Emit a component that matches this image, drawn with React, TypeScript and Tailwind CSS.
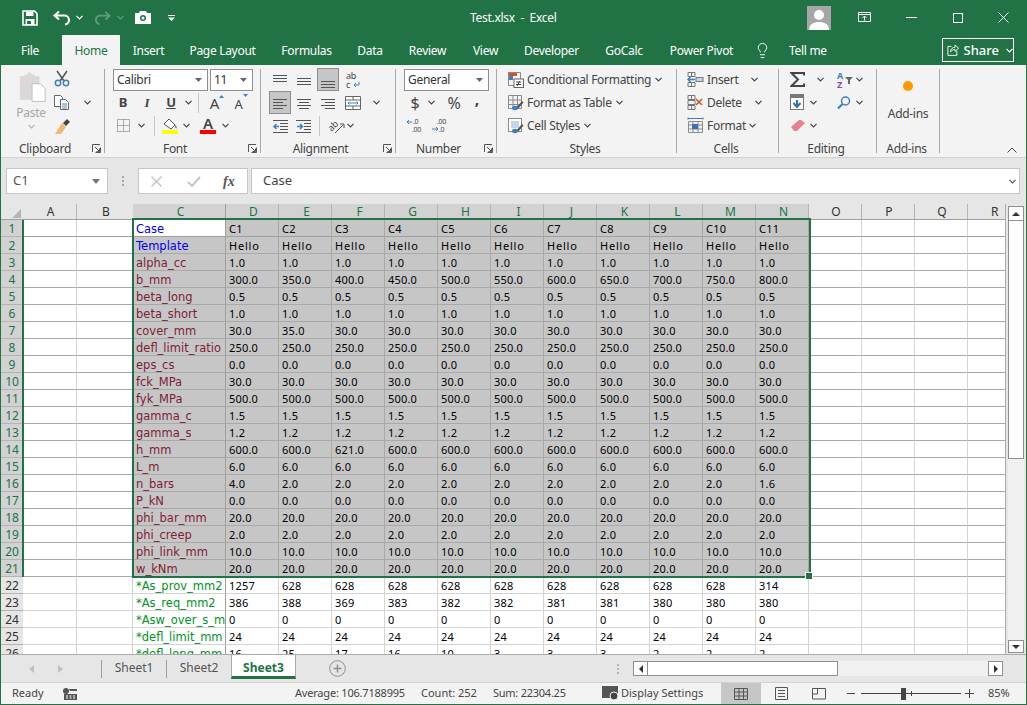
import { Lightbulb } from 'lucide-react';

const rows: [string, string[]][] = [
  ['Case', ['C1', 'C2', 'C3', 'C4', 'C5', 'C6', 'C7', 'C8', 'C9', 'C10', 'C11']],
  ['Template', Array(11).fill('Hello')],
  ['alpha_cc', Array(11).fill('1.0')],
  ['b_mm', ['300.0', '350.0', '400.0', '450.0', '500.0', '550.0', '600.0', '650.0', '700.0', '750.0', '800.0']],
  ['beta_long', Array(11).fill('0.5')],
  ['beta_short', Array(11).fill('1.0')],
  ['cover_mm', ['30.0', '35.0', ...Array(9).fill('30.0')]],
  ['defl_limit_ratio', Array(11).fill('250.0')],
  ['eps_cs', Array(11).fill('0.0')],
  ['fck_MPa', Array(11).fill('30.0')],
  ['fyk_MPa', Array(11).fill('500.0')],
  ['gamma_c', Array(11).fill('1.5')],
  ['gamma_s', Array(11).fill('1.2')],
  ['h_mm', ['600.0', '600.0', '621.0', ...Array(8).fill('600.0')]],
  ['L_m', Array(11).fill('6.0')],
  ['n_bars', ['4.0', ...Array(9).fill('2.0'), '1.6']],
  ['P_kN', Array(11).fill('0.0')],
  ['phi_bar_mm', Array(11).fill('20.0')],
  ['phi_creep', Array(11).fill('2.0')],
  ['phi_link_mm', Array(11).fill('10.0')],
  ['w_kNm', Array(11).fill('20.0')],
  ['*As_prov_mm2', ['1257', ...Array(9).fill('628'), '314']],
  ['*As_req_mm2', ['386', '388', '369', '383', '382', '382', '381', '381', '380', '380', '380']],
  ['*Asw_over_s_mm', Array(11).fill('0')],
  ['*defl_limit_mm', Array(11).fill('24')],
  ['*defl_long_mm', ['16', '25', '17', '16', '10', '3', '3', '3', '2', '2', '2']],
];

const dataCols = ['D', 'E', 'F', 'G', 'H', 'I', 'J', 'K', 'L', 'M', 'N'];

const Chev = ({ color = '#444' }: { color?: string }) => (
  <svg width="7" height="5" viewBox="0 0 7 5" className="shrink-0">
    <path d="M.5 .8 3.5 3.8 6.5 .8" fill="none" stroke={color} strokeWidth="1.2" />
  </svg>
);

const Lines = ({ ys, xs }: { ys: number[]; xs: [number, number][] }) => (
  <svg width="16" height="16" viewBox="0 0 16 16" className="shrink-0">
    {ys.map((y, i) => (
      <line key={y} x1={xs[i][0]} x2={xs[i][1]} y1={y} y2={y} stroke="#555" strokeWidth="1" />
    ))}
  </svg>
);

const Launcher = () => (
  <svg width="9" height="9" viewBox="0 0 9 9">
    <path d="M.5 8V.5H8M8.500 3.500v5h-5M3 3l4 4M7.500 4.500v3h-3" fill="none" stroke="#555" strokeWidth="1" />
  </svg>
);

const Group = ({ w, label, launcher, children }: { w: string; label: string; launcher?: boolean; children: React.ReactNode }) => (
  <div className={`${w} h-[84px] shrink-0 border-r border-[#a9a9a9] flex flex-col`}>
    <div className="h-[73px] shrink-0 -mt-px">{children}</div>
    <div className={`grid ${launcher ? 'grid-cols-[1fr_auto_1fr_12px]' : 'grid-cols-[1fr_auto_1fr]'} items-center h-[15px] shrink-0 pr-[3px]`}>
      <span />
      <span className="text-[12px] leading-[15px] text-[#444] whitespace-nowrap">{label}</span>
      <span />
      {launcher && <span className="justify-self-end flex"><Launcher /></span>}
    </div>
  </div>
);

const Row = ({ children }: { children: React.ReactNode }) => <div className="flex items-center h-[23px]">{children}</div>;

const Combo = ({ w, text }: { w: string; text: string }) => (
  <div className={`${w} h-[22px] bg-white border border-[#8f8f8f] flex items-center justify-between pl-[3px] pr-[5px] text-[12px] text-[#333]`}>
    <span>{text}</span>
    <svg width="7" height="4" viewBox="0 0 7 4"><path d="M0 0h7L3.500 4z" fill="#666" /></svg>
  </div>
);

const Sep = ({ className }: { className: string }) => <div className={`w-px h-[20px] bg-[#c6c6c6] ${className}`} />;

const GridBase = ({ children }: { children?: React.ReactNode }) => (
  <svg width="17" height="17" viewBox="0 0 17 17" className="shrink-0">
    <path d="M1.500 1.500h13v13h-13zM1.500 6h13M1.500 10.500h13M6 1.500v13M10.500 1.500v13" fill="none" stroke="#8a8a8a" strokeWidth="1" />
    {children}
  </svg>
);

const Brush = () => (
  <g>
    <path d="M9 14 15 7l1.500 1.500L11 15z" fill="#555" />
    <ellipse cx="8" cy="14" rx="3" ry="2.200" fill="#3f7fc0" />
  </g>
);

export default function App() {
  return (
    <div className="w-[1027px] h-[705px] overflow-hidden flex flex-col bg-[#217346] border-x border-b border-[#217346] text-[12px] tracking-[-0.3px] text-[#444] font-['Noto_Sans',sans-serif]">
      {/* title bar */}
      <div className="h-[35px] shrink-0 flex items-center text-white">
        <div className="w-[469px] flex items-center shrink-0">
          <svg width="16" height="16" viewBox="0 0 16 16" className="ml-[21px]">
            <path d="M1 1h11.500L15 3.500V15H1z" fill="none" stroke="#fff" strokeWidth="1.600" />
            <rect x="4" y="1.500" width="7.500" height="4.500" fill="#fff" />
            <rect x="3.500" y="9" width="9" height="6" fill="#fff" />
            <rect x="5" y="11" width="4" height="3" fill="#217346" />
          </svg>
          <svg width="19" height="16" viewBox="0 0 19 16" className="ml-[14px]">
            <path d="M7 1.500 2.500 5.500 7 9.500M3 5.500h9a4.500 4.500 0 0 1 1 9" fill="none" stroke="#fff" strokeWidth="2" />
          </svg>
          <div className="ml-[5px]"><Chev color="#fff" /></div>
          <svg width="18" height="16" viewBox="0 0 19 16" className="ml-[11px]">
            <path d="M12 1.500 16.500 5.500 12 9.500M16 5.500H7a4.500 4.500 0 0 0-1 9" fill="none" stroke="#5e9c7b" strokeWidth="2" />
          </svg>
          <div className="ml-[5px]"><Chev color="#5e9c7b" /></div>
          <svg width="16" height="13" viewBox="0 0 16 13" className="ml-[11px]">
            <path d="M0 2h4l1-2h6l1 2h4v11H0z" fill="#fff" />
            <circle cx="8" cy="7" r="3" fill="#217346" />
            <circle cx="8" cy="7" r="1.500" fill="#fff" />
          </svg>
          <svg width="7" height="6" viewBox="0 0 7 6" className="ml-[17px]">
            <path d="M0 .5h7" stroke="#fff" />
            <path d="M0 2.500h7L3.500 6z" fill="#fff" />
          </svg>
        </div>
        <span className="text-[12px] whitespace-pre">Test.xlsx  -  Excel</span>
        <div className="ml-auto flex items-center">
          <svg width="24" height="24" viewBox="0 0 24 24" className="block">
            <rect width="24" height="24" fill="#a6a6a6" />
            <circle cx="12" cy="9" r="5" fill="#fff" />
            <path d="M2 24c0-6 5-8 10-8s10 2 10 8z" fill="#fff" />
          </svg>
          <svg width="14" height="11" viewBox="0 0 14 11" className="ml-[27px]">
            <path d="M.5 .5h12v9H.5zM.5 2.500h12M6.500 8.500v-4M4.500 6l2-2 2 2" fill="none" stroke="#fff" />
          </svg>
          <div className="ml-[34px] w-[11px] h-px bg-white" />
          <div className="ml-[36px] w-[10px] h-[10px] border border-white" />
          <svg width="11" height="11" viewBox="0 0 11 11" className="ml-[35px] mr-[17px]">
            <path d="M.5 .5 10.500 10.500M10.500 .5 .5 10.500" stroke="#fff" />
          </svg>
        </div>
      </div>

      {/* tabs */}
      <div className="h-[30px] shrink-0 flex text-white text-[12px] leading-[31px]">
        <div className="w-[58px] text-center">File</div>
        <div className="w-[58px] ml-[3px] text-center bg-[#f3f3f3] text-[#217346]">Home</div>
        <div className="w-[57px] text-center">Insert</div>
        <div className="w-[91px] text-center">Page Layout</div>
        <div className="w-[77px] text-center">Formulas</div>
        <div className="w-[50px] text-center">Data</div>
        <div className="w-[65px] text-center">Review</div>
        <div className="w-[51px] text-center">View</div>
        <div className="w-[81px] text-center">Developer</div>
        <div className="w-[64px] text-center">GoCalc</div>
        <div className="w-[91px] text-center">Power Pivot</div>
        <div className="ml-[7px] w-[17px] shrink-0 flex items-center"><Lightbulb size={17} strokeWidth={1.3} /></div>
        <div className="ml-[18px] w-[38px] shrink-0 whitespace-nowrap">Tell me</div>
        <div className="ml-[115px] mt-[3px] w-[72px] h-[24px] shrink-0 flex items-center border border-white text-[13px] leading-[22px] font-medium tracking-normal">
          <svg width="14" height="14" viewBox="0 0 14 14" className="ml-[4px] mr-[4px]">
            <path d="M5 3H1v10h10V8M4 9c0-3 2-5 5-5V1.500L13 5 9 8.500V6.500C7 6.500 5 7.500 4 9z" fill="none" stroke="#fff" />
          </svg>
          <span>Share</span>
          <div className="ml-[7px]"><Chev color="#fff" /></div>
        </div>
      </div>

      {/* ribbon */}
      <div className="h-[93px] shrink-0 flex pt-[4px] bg-[#f3f3f3] border-b border-[#d2d2d2]">
        <Group w="w-[104px]" label="Clipboard" launcher>
          <div className="flex">
            <div className="ml-[11px] w-[38px] flex flex-col items-center text-[#a6a6a6]">
              <svg width="28" height="31" viewBox="0 0 30 32" className="mt-[4px] ml-[4px]">
                <path d="M1 4h5V2h3l1-2h3l1 2h3v2h5v25H1z" fill="#dcd8d8" />
                <path d="M14 12h9l5 5v14H14z" fill="#fff" stroke="#bdbdbd" />
              </svg>
              <span className="mt-[2px] leading-[16px]">Paste</span>
              <div className="mt-[3px]"><Chev color="#b5b5b5" /></div>
            </div>
            <div className="ml-[4px]">
              <Row>
                <svg width="16" height="17" viewBox="0 0 16 17" className="-mt-[2px]">
                  <path d="M3 1l7 10M13 1 6 11" stroke="#555" strokeWidth="1.500" fill="none" />
                  <circle cx="4" cy="13" r="2.700" fill="none" stroke="#4a7fb5" strokeWidth="1.500" />
                  <circle cx="12" cy="13" r="2.700" fill="none" stroke="#4a7fb5" strokeWidth="1.500" />
                </svg>
              </Row>
              <Row>
                <svg width="16" height="15" viewBox="0 0 16 15">
                  <path d="M.5 .5h6l2 2v9h-8z" fill="#fff" stroke="#666" />
                  <path d="M6.500 4.500h5l3 3v7h-8z" fill="#fff" stroke="#666" />
                  <path d="M8 9h5M8 11h5M8 13h5" stroke="#5b8dc0" />
                </svg>
                <div className="ml-[14px]"><Chev /></div>
              </Row>
              <Row>
                <svg width="17" height="16" viewBox="0 0 17 16">
                  <path d="M9 5 13 1l3 3-4 4z" fill="#444" />
                  <path d="M8 5l4 4-5 7H1z" fill="#f0b775" />
                </svg>
              </Row>
            </div>
          </div>
        </Group>

        <Group w="w-[156px]" label="Font" launcher>
          <Row>
            <div className="ml-[8px]"><Combo w="w-[95px]" text="Calibri" /></div>
            <div className="ml-[2px]"><Combo w="w-[43px]" text="11" /></div>
          </Row>
          <Row>
            <div className="ml-[6px] w-[24px] text-center font-bold text-[13px]">B</div>
            <div className="w-[24px] text-center italic text-[13px] font-['Liberation_Serif',serif] font-bold">I</div>
            <div className="w-[24px] text-center underline font-bold text-[13px]">U</div>
            <div className="ml-[2px]"><Chev /></div>
            <Sep className="ml-[6px]" />
            <div className="ml-[6px] w-[24px] flex justify-center items-start">
              <span className="text-[15px] leading-[18px]">A</span>
              <svg width="5" height="3" viewBox="0 0 5 3" className="mt-[1px]"><path d="M0 3h5L2.500 0z" fill="#3f7fc0" /></svg>
            </div>
            <div className="w-[24px] flex justify-center items-start">
              <span className="text-[13px] leading-[18px] mt-[2px]">A</span>
              <svg width="5" height="3" viewBox="0 0 5 3" className="mt-[1px]"><path d="M0 0h5L2.500 3z" fill="#3f7fc0" /></svg>
            </div>
          </Row>
          <Row>
            <svg width="13" height="13" viewBox="0 0 13 13" className="ml-[12px]">
              <path d="M.5 .5h12v12H.5zM6.500 .5v12M.5 6.500h12" fill="none" stroke="#666" strokeDasharray="1 1" />
            </svg>
            <div className="ml-[8px]"><Chev /></div>
            <Sep className="ml-[9px]" />
            <svg width="16" height="17" viewBox="0 0 16 17" className="ml-[7px]">
              <path d="M2 7 7 2l6 6-4 4z" fill="#fff" stroke="#555" />
              <path d="M13 8c2 1 2 3 1.500 3.500S12.500 10 13 8z" fill="#3f7fc0" />
              <rect y="13" width="16" height="4" fill="#ffff00" />
            </svg>
            <div className="ml-[5px]"><Chev /></div>
            <div className="ml-[10px] w-[16px] flex flex-col items-center">
              <span className="text-[15px] leading-[13px] font-semibold">A</span>
              <div className="w-[16px] h-[4px] bg-[#ff0000]" />
            </div>
            <div className="ml-[6px]"><Chev /></div>
          </Row>
        </Group>

        <Group w="w-[135px]" label="Alignment" launcher>
          <Row>
            <div className="ml-[11px]"><Lines ys={[3.500, 6.500, 9.500]} xs={[[1, 15], [1, 15], [1, 15]]} /></div>
            <div className="ml-[8px]"><Lines ys={[6.500, 9.500, 12.500]} xs={[[1, 15], [1, 15], [1, 15]]} /></div>
            <div className="ml-[5px] w-[22px] h-[23px] flex items-center justify-center bg-[#c6c6c6] border border-[#8f8f8f]"><Lines ys={[9.500, 12.500, 15.500]} xs={[[1, 15], [1, 15], [1, 15]]} /></div>
            <svg width="15" height="18" viewBox="0 0 15 18" className="ml-[7px]">
              <text x="0" y="7.500" fontSize="9" fill="#444" fontFamily="Noto Sans">ab</text>
              <text x="0" y="16.500" fontSize="9" fill="#444" fontFamily="Noto Sans">c</text>
              <path d="M13 11v3H8M10 12l-2 2 2 2" fill="none" stroke="#3f7fc0" />
            </svg>
          </Row>
          <Row>
            <div className="ml-[8px] w-[22px] h-[23px] flex items-center justify-center bg-[#c6c6c6] border border-[#8f8f8f]"><Lines ys={[4.500, 7.500, 10.500, 13.500]} xs={[[1, 15], [1, 11], [1, 15], [1, 11]]} /></div>
            <div className="ml-[5px]"><Lines ys={[4.500, 7.500, 10.500, 13.500]} xs={[[1, 15], [3, 13], [1, 15], [3, 13]]} /></div>
            <div className="ml-[8px]"><Lines ys={[4.500, 7.500, 10.500, 13.500]} xs={[[1, 15], [5, 15], [1, 15], [5, 15]]} /></div>
            <svg width="16" height="16" viewBox="0 0 16 16" className="ml-[9px]">
              <path d="M.5 1.500h15v13H.5zM.5 5h15M.5 11h15M8 1.500V5M8 11v3.500" fill="#fff" stroke="#666" />
              <path d="M3 8h10M4.500 6.500 3 8l1.500 1.500M11.500 6.500 13 8l-1.500 1.500" fill="none" stroke="#3f7fc0" />
            </svg>
            <div className="ml-[12px]"><Chev /></div>
          </Row>
          <Row>
            <svg width="16" height="16" viewBox="0 0 16 16" className="ml-[11px]">
              <path d="M1 2.500h15M8 5.500h8M8 8.500h8M8 11.500h8M1 14.500h15" stroke="#555" />
              <path d="M7 8.500H2M4.500 6 2 8.500 4.500 11" fill="none" stroke="#3f7fc0" strokeWidth="1.500" />
            </svg>
            <svg width="16" height="16" viewBox="0 0 16 16" className="ml-[8px]">
              <path d="M0 2.500h15M8 5.500h7M8 8.500h7M8 11.500h7M0 14.500h15" stroke="#555" />
              <path d="M1 8.500h5M4 6 6.500 8.500 4 11" fill="none" stroke="#3f7fc0" strokeWidth="1.500" />
            </svg>
            <Sep className="ml-[7px]" />
            <svg width="18" height="18" viewBox="0 0 18 18" className="ml-[7px]">
              <text x="1" y="12" fontSize="9" fill="#444" fontFamily="Noto Sans" transform="rotate(-45 6 9)">ab</text>
              <path d="M8 16 16 8M13 7h4v4" fill="none" stroke="#555" />
            </svg>
            <div className="ml-[2px]"><Chev /></div>
          </Row>
        </Group>

        <Group w="w-[101px]" label="Number" launcher>
          <Row><div className="ml-[8px]"><Combo w="w-[85px]" text="General" /></div></Row>
          <Row>
            <div className="ml-[11px] w-[16px] text-center text-[16px] leading-[18px]">$</div>
            <div className="ml-[5px]"><Chev /></div>
            <div className="ml-[9px] w-[20px] text-center text-[16px] leading-[18px]">%</div>
            <div className="ml-[6px] w-[14px] h-[14px] text-center text-[16px] leading-[6px] font-bold">,</div>
          </Row>
          <Row>
            <svg width="17" height="17" viewBox="0 0 17 17" className="ml-[10px]">
              <text x="7" y="7" fontSize="7" fill="#444" fontFamily="Noto Sans">.0</text>
              <text x="6" y="15" fontSize="7" fill="#444" fontFamily="Noto Sans">.00</text>
              <path d="M6 5H1M3 3 1 5l2 2" fill="none" stroke="#3f7fc0" />
            </svg>
            <svg width="17" height="17" viewBox="0 0 17 17" className="ml-[8px]">
              <text x="6" y="7" fontSize="7" fill="#444" fontFamily="Noto Sans">.00</text>
              <text x="8" y="15" fontSize="7" fill="#444" fontFamily="Noto Sans">.0</text>
              <path d="M1 12h6M5 10l2 2-2 2" fill="none" stroke="#3f7fc0" />
            </svg>
          </Row>
        </Group>

        <Group w="w-[180px]" label="Styles">
          <Row>
            <svg width="17" height="17" viewBox="0 0 17 17" className="ml-[10px]">
              <rect x="1" y="1" width="9" height="4" fill="#d2532e" />
              <rect x="1" y="5" width="5" height="4" fill="#3f7fc0" />
              <path d="M1.500 1.500h12v13h-12z" fill="none" stroke="#8a8a8a" />
              <rect x="7" y="8" width="9.500" height="8.500" fill="#fff" stroke="#666" />
              <path d="M9 11h5M9 13.500h5M10 15l3-5" stroke="#444" />
            </svg>
            <span className="ml-[3px] whitespace-nowrap">Conditional Formatting</span>
            <div className="ml-[4px]"><Chev /></div>
          </Row>
          <Row>
            <div className="ml-[10px] flex"><GridBase><Brush /></GridBase></div>
            <span className="ml-[3px] whitespace-nowrap">Format as Table</span>
            <div className="ml-[4px]"><Chev /></div>
          </Row>
          <Row>
            <div className="ml-[10px] flex">
              <svg width="17" height="17" viewBox="0 0 17 17">
                <rect x="1.500" y="1.500" width="13" height="13" fill="#fff" stroke="#8a8a8a" />
                <rect x="4" y="4" width="8" height="7" fill="#c5d5e8" />
                <Brush />
              </svg>
            </div>
            <span className="ml-[3px] whitespace-nowrap">Cell Styles</span>
            <div className="ml-[4px]"><Chev /></div>
          </Row>
        </Group>

        <Group w="w-[102px]" label="Cells">
          <Row>
            <div className="ml-[10px] flex">
              <svg width="17" height="17" viewBox="0 0 17 17">
                <path d="M1 1.500h7v4H1zM1 11.500h7v4H1zM4.500 1.500v4M4.500 11.500v4" fill="none" stroke="#777" />
                <rect x="9" y="6.500" width="7" height="4" fill="#c5d5e8" stroke="#777" />
                <path d="M8 8.500H1M3.500 6 1 8.500 3.500 11" fill="none" stroke="#3f7fc0" strokeWidth="1.500" />
              </svg>
            </div>
            <span className="ml-[3px] w-[44px]">Insert</span>
            <Chev />
          </Row>
          <Row>
            <div className="ml-[10px] flex">
              <svg width="17" height="17" viewBox="0 0 17 17">
                <path d="M1 1.500h7v4H1zM1 11.500h7v4H1zM1 6.500h7v4H1zM4.500 1.500v4M4.500 11.500v4" fill="none" stroke="#777" />
                <path d="M9 5l6 6M15 5l-6 6" stroke="#d2532e" strokeWidth="1.600" />
              </svg>
            </div>
            <span className="ml-[3px] w-[48px]">Delete</span>
            <Chev />
          </Row>
          <Row>
            <div className="ml-[10px] flex">
              <svg width="17" height="17" viewBox="0 0 17 17">
                <path d="M1.500 4.500h14v11h-14zM1.500 8h14M1.500 12h14M6 4.500v11M11 4.500v11" fill="none" stroke="#8a8a8a" />
                <rect x="5" y="7" width="6" height="5" fill="#3f6fb0" />
                <path d="M1 1.500h15M1 .5v2M16 .5v2" stroke="#3f7fc0" />
              </svg>
            </div>
            <span className="ml-[3px] w-[42px]">Format</span>
            <Chev />
          </Row>
        </Group>

        <Group w="w-[98px]" label="Editing">
          <Row>
            <svg width="15" height="15" viewBox="0 0 15 15" className="ml-[11px]">
              <path d="M14 3.500V1H1.500L8 7.500 1.500 14H14v-2.500" fill="none" stroke="#444" strokeWidth="2" />
            </svg>
            <div className="ml-[12px]"><Chev /></div>
            <svg width="16" height="18" viewBox="0 0 16 18" className="ml-[13px]">
              <text x="0" y="8" fontSize="9" fontWeight="700" fill="#3f7fc0" fontFamily="Noto Sans">A</text>
              <text x="0" y="17" fontSize="9" fontWeight="700" fill="#7d4ab5" fontFamily="Noto Sans">Z</text>
              <path d="M8 6h8l-3 3v4h-2V9z" fill="#666" />
            </svg>
            <div className="ml-[3px]"><Chev /></div>
          </Row>
          <Row>
            <svg width="15" height="17" viewBox="0 0 15 17" className="ml-[11px]">
              <rect x=".5" y=".5" width="13" height="15" fill="#fff" stroke="#777" />
              <rect x="1" y="1" width="12" height="3" fill="#777" />
              <path d="M7 6v6M3.500 9 7 13l3.500-4" fill="none" stroke="#2f6fb5" strokeWidth="2" />
            </svg>
            <div className="ml-[5px]"><Chev /></div>
            <svg width="14" height="14" viewBox="0 0 14 14" className="ml-[20px]">
              <circle cx="8.500" cy="5" r="4" fill="none" stroke="#3f7fc0" strokeWidth="1.500" />
              <path d="M5.500 8 1 12.500" stroke="#3f7fc0" strokeWidth="2.200" />
            </svg>
            <div className="ml-[5px]"><Chev /></div>
          </Row>
          <Row>
            <svg width="14" height="13" viewBox="0 0 14 13" className="ml-[12px]">
              <path d="M0 8 8 1h2l4 3-8 8H3z" fill="#e8808e" />
            </svg>
            <div className="ml-[5px]"><Chev /></div>
          </Row>
        </Group>

        <Group w="w-[63px]" label="Add-ins">
          <div className="flex flex-col items-center">
            <div className="mt-[13px] -ml-px w-[10px] h-[10px] rounded-full bg-[#ff9900] blur-[0.5px]" />
            <span className="mt-[15px] leading-[16px]">Add-ins</span>
          </div>
        </Group>

        <div className="flex-1 flex items-end justify-end pb-[4px] pr-[9px]">
          <svg width="10" height="6" viewBox="0 0 10 6"><path d="M.5 5.500 5 1l4.500 4.500" fill="none" stroke="#444" /></svg>
        </div>
      </div>

      {/* formula bar */}
      <div className="h-[46px] shrink-0 bg-[#e6e6e6] flex items-start pt-[10px] tracking-normal">
        <div className="ml-[5px] w-[102px] h-[26px] bg-white border border-[#c6c6c6] flex items-center justify-between pl-[6px] pr-[7px] text-[13px] text-[#555]">
          <span>C1</span>
          <svg width="8" height="5" viewBox="0 0 8 5"><path d="M0 0h8L4 5z" fill="#777" /></svg>
        </div>
        <div className="ml-[14px] h-[26px] flex flex-col justify-center gap-[2px]">
          <div className="w-[2px] h-[2px] bg-[#a6a6a6]" />
          <div className="w-[2px] h-[2px] bg-[#a6a6a6]" />
          <div className="w-[2px] h-[2px] bg-[#a6a6a6]" />
        </div>
        <div className="ml-[14px] w-[110px] h-[26px] bg-white border border-[#c6c6c6] flex items-center">
          <svg width="11" height="11" viewBox="0 0 11 11" className="ml-[12px]"><path d="M.5 .5 10.500 10.500M10.500 .5 .5 10.500" stroke="#c6c6c6" strokeWidth="1.500" /></svg>
          <svg width="14" height="11" viewBox="0 0 14 11" className="ml-[25px]"><path d="M1 6l4 4 8-9" fill="none" stroke="#c6c6c6" strokeWidth="2" /></svg>
          <span className="ml-[22px] italic font-bold text-[14px] font-['Liberation_Serif',serif] text-[#555]">fx</span>
        </div>
        <div className="ml-[3px] w-[769px] h-[26px] bg-white border border-[#c6c6c6] flex items-center justify-between pl-[11px] pr-[3px] text-[13px] text-[#444]">
          <span>Case</span>
          <Chev color="#555" />
        </div>
      </div>

      {/* sheet */}
      <div className="h-[450px] shrink-0 flex bg-white tracking-normal">
        <div className="relative w-[1005px] h-[450px] overflow-hidden border-r border-[#ababab]">
          <div className="flex h-[16px] bg-[#e6e6e6] border-b border-[#9f9f9f] text-[12px] leading-[15px] text-[#333] text-center">
            <div className="w-[22px] shrink-0 flex justify-end items-end pr-[2px] pb-[1px]">
              <svg width="9" height="9" viewBox="0 0 9 9"><path d="M9 0v9H0z" fill="#b4b4b4" /></svg>
            </div>
            <div className="w-[54px] pl-[2px] shrink-0 border-r border-[#b4b4b4]">A</div>
            <div className="w-[56px] pl-[2px] shrink-0">B</div>
            <div className="w-[93px] pl-[3px] shrink-0 bg-[#d2d2d2] text-[#217346] border-r border-[#9f9f9f]">C</div>
            {dataCols.map((c) => (
              <div key={c} className="w-[53px] pl-[3px] shrink-0 bg-[#d2d2d2] text-[#217346] border-r border-[#b4b4b4]">{c}</div>
            ))}
            <div className="w-[53px] pl-[2px] shrink-0 border-r border-[#b4b4b4]">O</div>
            <div className="w-[53px] pl-[2px] shrink-0 border-r border-[#b4b4b4]">P</div>
            <div className="w-[53px] pl-[2px] shrink-0 border-r border-[#b4b4b4]">Q</div>
            <div className="flex-1 text-left pl-[23px]">R</div>
          </div>
          {rows.map(([label, values], i) => {
            const sel = i < 21;
            const line = i === 0 ? 'border-b-[#9f9f9f]' : sel ? 'border-b-[#a9a9a9]' : 'border-b-[#d4d4d4]';
            const labelColor = i < 2 ? 'text-[#0000ee]' : sel ? 'text-[#7f1d35]' : 'text-[#00931f]';
            return (
              <div key={label} className="flex h-[17px] text-[11px] tracking-[0.2px] leading-[18px] text-black">
                <div className={`w-[22px] shrink-0 text-center text-[12px] tracking-normal border-b ${sel ? 'bg-[#d2d2d2] text-[#217346] border-b-[#b4b4b4]' : 'bg-[#e6e6e6] text-[#333] border-b-[#b4b4b4]'}`}>{i + 1}</div>
                <div className={`w-[54px] shrink-0 border-r border-r-[#d4d4d4] border-b ${line}`} />
                <div className={`w-[56px] shrink-0 border-r border-r-[#d4d4d4] border-b ${line}`} />
                <div className={`w-[93px] shrink-0 pl-[3px] overflow-hidden whitespace-nowrap border-b border-r border-r-[#9f9f9f] ${line} ${labelColor} ${i > 0 && sel ? 'bg-[#c6c6c6]' : ''} font-['DejaVu_Sans',sans-serif] text-[11.500px] tracking-normal`}>{label}</div>
                {values.map((v, j) => (
                  <div key={j} className={`w-[53px] shrink-0 pl-[3px] overflow-hidden whitespace-nowrap border-r border-b ${line} ${sel ? 'bg-[#c6c6c6] border-r-[#a9a9a9]' : 'border-r-[#d4d4d4]'} ${v === 'Hello' ? 'tracking-[0.8px]' : ''}`}>{v}</div>
                ))}
                <div className={`w-[53px] shrink-0 border-r border-r-[#d4d4d4] border-b ${line}`} />
                <div className={`w-[53px] shrink-0 border-r border-r-[#d4d4d4] border-b ${line}`} />
                <div className={`w-[53px] shrink-0 border-r border-r-[#d4d4d4] border-b ${line}`} />
                <div className={`flex-1 border-b ${line}`} />
              </div>
            );
          })}
          {/* selection outline */}
          <div className="absolute left-[21px] top-[16px] w-[2px] h-[357px] bg-[#217346]" />
          <div className="absolute left-[131px] top-[14px] w-[679px] h-[360px] border-2 border-[#217346]" />
          <div className="absolute left-[805px] top-[369px] w-[6px] h-[6px] bg-[#217346] outline outline-1 outline-white" />
        </div>
        <div className="flex-1 bg-[#e6e6e6] px-[2px] pt-[2px] pb-[1px] flex flex-col">
          <div className="h-[15px] bg-white border border-[#8f8f8f] flex items-center justify-center">
            <svg width="8" height="4" viewBox="0 0 8 4"><path d="M0 4h8L4 0z" fill="#333" /></svg>
          </div>
          <div className="h-[238px] bg-white border border-t-0 border-[#8f8f8f]" />
          <div className="flex-1 bg-[#f0f0f0]" />
          <div className="h-[13px] bg-white border border-[#8f8f8f] flex items-center justify-center">
            <svg width="8" height="4" viewBox="0 0 8 4"><path d="M0 0h8L4 4z" fill="#333" /></svg>
          </div>
        </div>
      </div>

      {/* sheet tabs */}
      <div className="h-[28px] shrink-0 bg-[#e6e6e6] border-t border-[#ababab] flex items-start tracking-normal">
        <svg width="5" height="8" viewBox="0 0 5 8" className="ml-[28px] mt-[10px]"><path d="M5 0v8L0 4z" fill="#c0c0c0" /></svg>
        <svg width="5" height="8" viewBox="0 0 5 8" className="ml-[24px] mt-[10px]"><path d="M0 0v8l5-4z" fill="#c0c0c0" /></svg>
        <div className="ml-[38px] mt-[5px] w-px h-[18px] bg-[#9f9f9f]" />
        <div className="w-[64px] mt-[3px] text-center text-[#555] leading-[19px]">Sheet1</div>
        <div className="mt-[5px] w-px h-[18px] bg-[#9f9f9f]" />
        <div className="w-[64px] mt-[3px] text-center text-[#555] leading-[19px]">Sheet2</div>
        <div className="w-[65px] h-[24px] bg-white border-x border-[#ababab] border-b-[3px] border-b-[#217346] text-center font-bold text-[#217346] leading-[25px]">Sheet3</div>
        <svg width="17" height="17" viewBox="0 0 17 17" className="ml-[33px] mt-[5px]">
          <circle cx="8.500" cy="8.500" r="7.800" fill="none" stroke="#8f8f8f" />
          <path d="M8.500 4.500v8M4.500 8.500h8" stroke="#8f8f8f" strokeWidth="1.500" />
        </svg>
        <div className="ml-[271px] mt-[9px] flex flex-col gap-[2px]">
          <div className="w-[2px] h-[2px] bg-[#b4b4b4]" />
          <div className="w-[2px] h-[2px] bg-[#b4b4b4]" />
          <div className="w-[2px] h-[2px] bg-[#b4b4b4]" />
        </div>
        <div className="ml-[14px] mt-[6px] w-[370px] h-[15px] flex bg-[#f0f0f0]">
          <div className="w-[15px] bg-white border border-[#8f8f8f] flex items-center justify-center">
            <svg width="4" height="8" viewBox="0 0 4 8"><path d="M4 0v8L0 4z" fill="#333" /></svg>
          </div>
          <div className="w-[190px] bg-white border border-l-0 border-[#8f8f8f]" />
          <div className="flex-1" />
          <div className="w-[15px] bg-white border border-[#8f8f8f] flex items-center justify-center">
            <svg width="4" height="8" viewBox="0 0 4 8"><path d="M0 0v8l4-4z" fill="#333" /></svg>
          </div>
        </div>
      </div>

      {/* status bar */}
      <div className="flex-1 bg-[#f3f3f3] border-t border-[#d2d2d2] flex items-center text-[11px] tracking-normal text-[#444]">
        <span className="ml-[11px] w-[51px]">Ready</span>
        <svg width="14" height="12" viewBox="0 0 14 12">
          <circle cx="3" cy="3" r="3" fill="#555" />
          <path d="M6 1h8v2H7zM1 6h13v6H1z" fill="#555" />
          <path d="M3 8h2M6.500 8h2M10 8h2M3 10h2M6.500 10h2M10 10h2" stroke="#fff" />
        </svg>
        <span className="ml-[218px] w-[126px] whitespace-nowrap tracking-[-0.2px]">Average: 106.7188995</span>
        <span className="w-[72px] whitespace-nowrap">Count: 252</span>
        <span className="w-[109px] whitespace-nowrap tracking-[-0.25px]">Sum: 22304.25</span>
        <svg width="17" height="15" viewBox="0 0 17 15">
          <path d="M0 0h16v9H8v3H0z" fill="#555" />
          <circle cx="12" cy="10" r="4" fill="#444" stroke="#f3f3f3" />
        </svg>
        <span className="ml-[2px] w-[100px] whitespace-nowrap">Display Settings</span>
        <div className="w-[40px] h-full bg-[#c6c6c6] flex items-center justify-center">
          <svg width="14" height="12" viewBox="0 0 14 12"><path d="M.5 .5h13v11H.5zM.5 4h13M.5 8h13M5 .5v11M9.500 .5v11" fill="none" stroke="#555" /></svg>
        </div>
        <svg width="13" height="13" viewBox="0 0 13 13" className="ml-[14px]"><path d="M.5 .5h12v12H.5zM3 3.500h7M3 6.500h7M3 9.500h7" fill="none" stroke="#555" /></svg>
        <svg width="14" height="12" viewBox="0 0 14 12" className="ml-[24px]"><path d="M.5 11V.5h13V11M.5 6h5V.5M.5 11h13" fill="none" stroke="#555" /></svg>
        <div className="ml-[21px] w-[8px] h-px bg-[#444]" />
        <div className="ml-[6px] w-[100px] h-[14px] flex items-center relative">
          <div className="w-full h-px bg-[#444]" />
          <div className="absolute left-[40px] w-[5px] h-[12px] bg-[#444]" />
          <div className="absolute left-[50px] w-px h-[5px] bg-[#444]" />
        </div>
        <svg width="9" height="9" viewBox="0 0 9 9" className="ml-[4px]"><path d="M4.500 0v9M0 4.500h9" stroke="#444" /></svg>
        <span className="ml-[14px]">85%</span>
      </div>
    </div>
  );
}
